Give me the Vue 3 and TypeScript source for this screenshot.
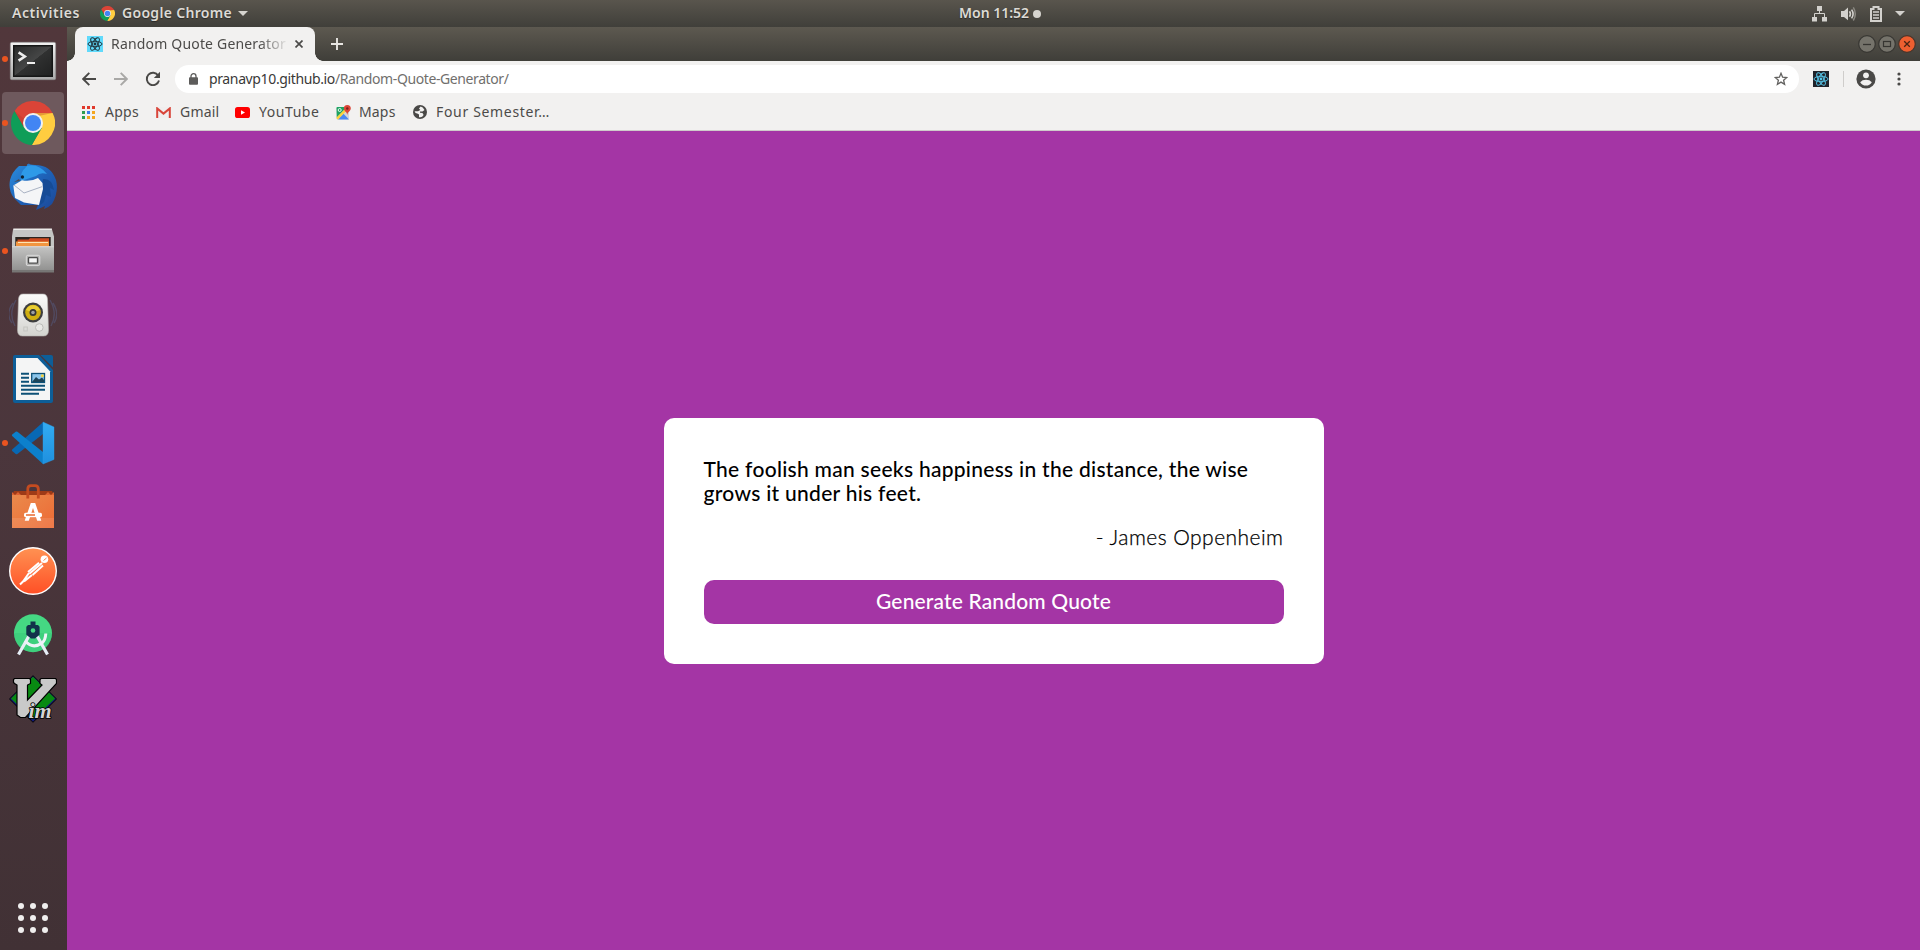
<script setup lang="ts">
import { ref } from 'vue'

interface Quote {
  text: string
  author: string
}

interface DockItem {
  id: string
  running?: boolean
  active?: boolean
}

const quote = ref<Quote>({
  text: 'The foolish man seeks happiness in the distance, the wise grows it under his feet.',
  author: 'James Oppenheim',
})

const dock: DockItem[] = [
  { id: 'terminal', running: true },
  { id: 'chrome', running: true, active: true },
  { id: 'thunderbird' },
  { id: 'files', running: true },
  { id: 'rhythmbox' },
  { id: 'writer' },
  { id: 'code', running: true },
  { id: 'software' },
  { id: 'postman' },
  { id: 'studio' },
  { id: 'vim' },
]

const grid = [0, 1, 2, 3, 4, 5, 6, 7, 8]
const appColors = ['#e0392b', '#e0392b', '#e0392b', '#2f9e4f', '#3b7ded', '#f4a61d', '#2f9e4f', '#f4a61d', '#f4a61d']
</script>

<template>
  <div class="desktop">
    <svg class="defs" width="0" height="0" aria-hidden="true">
      <defs>
        <linearGradient id="gTerm" x1="0" y1="0" x2="0" y2="1">
          <stop offset="0" stop-color="#f2f2f2" /><stop offset="1" stop-color="#a9a9a9" />
        </linearGradient>
        <linearGradient id="gTermIn" x1="0" y1="0" x2="1" y2="1">
          <stop offset="0" stop-color="#2a2b2b" /><stop offset=".5" stop-color="#454646" /><stop offset=".51" stop-color="#303131" /><stop offset="1" stop-color="#202121" />
        </linearGradient>
        <linearGradient id="gBird" x1="0" y1="0" x2="1" y2="1">
          <stop offset="0" stop-color="#2a8fe0" /><stop offset=".5" stop-color="#1e62b8" /><stop offset="1" stop-color="#1c4696" />
        </linearGradient>
        <linearGradient id="gFile" x1="0" y1="0" x2="0" y2="1">
          <stop offset="0" stop-color="#c4c4c3" /><stop offset="1" stop-color="#8e8e8d" />
        </linearGradient>
        <linearGradient id="gSpk" x1="0" y1="0" x2="0" y2="1">
          <stop offset="0" stop-color="#fbfbfa" /><stop offset="1" stop-color="#d3d3cf" />
        </linearGradient>
        <linearGradient id="gBag" x1="0" y1="0" x2="1" y2="1">
          <stop offset="0" stop-color="#ea8a4c" /><stop offset="1" stop-color="#ed6a35" />
        </linearGradient>
        <linearGradient id="gPost" x1="0" y1="0" x2="0" y2="1">
          <stop offset="0" stop-color="#ff9152" /><stop offset="1" stop-color="#ff5026" />
        </linearGradient>
        <linearGradient id="gVs" x1="0" y1="0" x2="0" y2="1">
          <stop offset="0" stop-color="#33acf2" /><stop offset="1" stop-color="#1f90df" />
        </linearGradient>
        <symbol id="chrome" viewBox="2 2 44 44">
          <path fill="#db4437" d="M5.54 12.03A22 22 0 0 1 43.6 14H24L15.34 29Z" />
          <path fill="#ffcd40" d="M43.6 14A22 22 0 0 1 22.86 45.97L32.66 29 24 14Z" />
          <path fill="#0f9d58" d="M22.86 45.97A22 22 0 0 1 5.54 12.03L15.34 29H32.66Z" />
          <path fill="#b5372c" opacity=".35" d="M24 14h19.6l-14 3ZM15.3 29 5.5 12l10 8Z" />
          <circle cx="24" cy="24" r="10" fill="#f1f1f1" />
          <circle cx="24" cy="24" r="8" fill="#4285f4" />
        </symbol>
        <symbol id="react" viewBox="0 0 16 16">
          <g fill="none" stroke="currentColor" stroke-width=".95">
            <ellipse cx="8" cy="8" rx="7" ry="2.7" />
            <ellipse cx="8" cy="8" rx="7" ry="2.7" transform="rotate(60 8 8)" />
            <ellipse cx="8" cy="8" rx="7" ry="2.7" transform="rotate(120 8 8)" />
          </g>
          <circle cx="8" cy="8" r="1.4" fill="currentColor" />
        </symbol>
      </defs>
    </svg>

    <header class="topbar">
      <div class="topbar-left">
        <span class="activities">Activities</span>
        <svg class="tb-chrome" width="15" height="15"><use href="#chrome" /></svg>
        <span class="appname">Google Chrome</span>
        <svg width="10" height="5"><path d="M0 0h10L5 5Z" fill="#d6d4cf" /></svg>
      </div>
      <div class="clock"><span>Mon 11:52</span><i class="clock-dot"></i></div>
      <div class="tray">
        <svg width="16" height="16" viewBox="0 0 16 16" fill="#d3d1cd">
          <path d="M5 0h5v5H5ZM0 11h5v4.5H0ZM10 11h5v4.5h-5Z" />
          <path d="M7.5 5v2.5M2.5 11V7.5h10V11" fill="none" stroke="#d3d1cd" />
        </svg>
        <svg width="16" height="16" viewBox="0 0 16 16" fill="none">
          <path d="M0 5h3l4-3.6v12.8L3 11H0Z" fill="#d3d1cd" />
          <path d="M8.5 5.3q1.8 2.7 0 5.4M10.6 3.6q3 4.3 0 8.8" stroke="#d3d1cd" stroke-width="1.6" />
          <path d="M12.3 1.3q4 6.6 0 13.2" stroke="#8a8780" stroke-width="1.5" />
        </svg>
        <svg width="12" height="16" viewBox="0 0 12 16">
          <path d="M3.5 1h5v2H11v12H1V3h2.5Z" fill="none" stroke="#d3d1cd" stroke-width="2" />
          <path d="M3 6h6M3 9h6M3 12h6" stroke="#d3d1cd" stroke-width="1.5" />
        </svg>
        <svg width="10" height="5"><path d="M0 0h10L5 5Z" fill="#d3d1cd" /></svg>
      </div>
    </header>

    <div class="body">
      <nav class="dock">
        <div v-for="item in dock" :key="item.id" class="dock-item" :class="{ active: item.active }">
          <i v-if="item.running" class="running"></i>
          <svg width="48" height="48" viewBox="0 0 48 48">
            <g v-if="item.id === 'terminal'">
              <rect x="1.3" y="7.3" width="45.4" height="37.4" rx="1.5" fill="url(#gTerm)" stroke="#8d8d8d" stroke-width=".6" />
              <rect x="4" y="10" width="40" height="32" fill="#151616" />
              <rect x="5.5" y="11.5" width="37" height="29" fill="url(#gTermIn)" />
              <path d="M9.6 17.3 15.8 21.5 9.6 25.7" fill="none" stroke="#eee" stroke-width="2.6" />
              <path d="M18 28h8" stroke="#eee" stroke-width="2" />
            </g>
            <use v-else-if="item.id === 'chrome'" href="#chrome" x="2" y="2" width="44" height="44" />
            <g v-else-if="item.id === 'thunderbird'">
              <path fill="url(#gBird)" d="M10 3Q15 3 18 3 17 1.5 20 .6 20 2 26 2 42 2 47 17 50 29 43 41 39 45 35 46L36 43 27 47 29 42 12 42 5 35Q-1 27 1 17 3 9 10 3Z" />
              <path fill="#2e9ae8" d="M18 3Q29 0 38 11 31 9 27 13L12 18Q10 10 18 3Z" />
              <path fill="#164b96" d="M34 16Q43 15 45 27L41 25 42 34 37 32 35 39 30 43 33 23Z" />
              <path fill="#f4f5f7" d="M4.3 22.5 13 17.3Q22 19 29 15L33.5 20 34 26 30 42 15 39.5 6 35Z" />
              <path d="m5 22 10 8 18-6.3" fill="none" stroke="#a9b2c3" stroke-width="1" />
              <circle cx="13.4" cy="14" r="1.7" fill="#123" /><path d="m5 19 5-3 1 2Z" fill="#4b4d54" />
            </g>
            <g v-else-if="item.id === 'files'">
              <path d="M4 2.5h39l2 7v10H3v-10Z" fill="#c5c5c4" />
              <path d="M4.3 2.3h38.6" stroke="#ecebea" stroke-width="1.4" />
              <path d="M6.3 10h35.4v10H6.3Z" fill="#2b2420" />
              <path d="M8.5 12.5h11l1.5-1.3h19v9h-31.5Z" fill="#cf4a1f" />
              <path d="M7 14.5h33v5H7Z" fill="#f2953f" /><path d="M9 15.5h30" stroke="#fde3b4" stroke-width="1" />
              <path d="M3 19.5h42V45H3Z" fill="url(#gFile)" /><path d="M3 19.7h42" stroke="#dedddc" />
              <path d="M3 43h42v2.6H3Z" fill="#777675" />
              <rect x="17.3" y="28.3" width="13.5" height="10.3" rx="1.5" fill="#b1b1b0" stroke="#dddcdc" />
              <rect x="19.5" y="30.6" width="9" height="5.6" rx=".7" fill="#f5f5f5" stroke="#4d4d4d" stroke-width="1.3" />
            </g>
            <g v-else-if="item.id === 'rhythmbox'">
              <g fill="none" stroke="#56618c" stroke-width="1.4" opacity=".45"><path d="M7 9Q-1 23 6 35M4 12Q-4 23 3 32M41 9q8 14 1 26M44 12q7 11 1 20" /></g>
              <path d="M14 3h20q4 0 4.5 5l1 31q0 6-5 6h-21q-5 0-5-6l1-31Q10 3 14 3Z" fill="url(#gSpk)" stroke="#b4b4b0" stroke-width=".6" />
              <circle cx="24" cy="21.5" r="10" fill="#3d3e3f" /><circle cx="24" cy="21.5" r="7.8" fill="#cfae10" />
              <path d="M17 19a7.5 7.5 0 0 1 14 0l-7 2.5Z" fill="#e8cd32" />
              <circle cx="24" cy="21.5" r="3.5" fill="#353638" /><circle cx="24" cy="21.5" r="1.8" fill="#9d9fa1" />
              <circle cx="30.3" cy="36.5" r="3.8" fill="#e9e9e6" stroke="#bcbcb8" /><rect x="14.8" y="36" width="3.5" height="4" fill="none" stroke="#c5c5c1" />
            </g>
            <g v-else-if="item.id === 'writer'">
              <path d="M6 0h24l14 15v31q0 2-2 2H6q-2 0-2-2V2q0-2 2-2Z" fill="#0d5e98" />
              <path d="M7 3h21.5L41 16.2V45H7Z" fill="#f4f5f5" />
              <path d="M31.5 0H42q2 0 2 2v10.5Z" fill="#0d5e98" />
              <path d="M12 18.8h8M12 22.8h8M12 26.8h8M12 30.8h24M12 34.8h24M12 38.8h18" stroke="#0d5177" stroke-width="2" />
              <rect x="22.7" y="18.5" width="12.8" height="9" fill="#8bc5ea" stroke="#0d5177" stroke-width="1.3" />
              <path d="m23 27 4-5 3 2.5 3-2 2 2.5v2Z" fill="#1d4458" /><circle cx="33.4" cy="20.7" r="1.5" fill="#f5d23d" />
            </g>
            <g v-else-if="item.id === 'code'">
              <path d="M34 3.2 3.2 30.5q-.6.8 0 1.5L6.7 35q.8.6 1.7 0L34 15Z" fill="#0868b4" />
              <path d="M34 45 3.2 17q-.6-.8 0-1.5L6.7 12.8q.8-.6 1.7 0L34 33Z" fill="#0c80cc" />
              <path d="m34 3 11 5v32.5L34 45Z" fill="url(#gVs)" stroke="#2b9fe8" stroke-width=".4" />
            </g>
            <g v-else-if="item.id === 'software'">
              <path d="M3 12 5 8h38l2 4Z" fill="#9e3a17" />
              <path d="M3 12V9l3 3 3-3 3 3M36 12l3-3 3 3 3-3v3" fill="#df6231" />
              <path d="M3 12h42v33H3Z" fill="url(#gBag)" /><path d="M3 35h42v10H3Z" fill="#fff" opacity=".1" />
              <path d="M18.8 15.5V6q0-3.3 3.2-3.3h4Q29.3 2.7 29.3 6v9.5" fill="none" stroke="#c44b20" stroke-width="2.8" />
              <path d="M15.7 37.8 21.8 20h4.4l6.1 17.8h-4.1L24 25l-4.2 12.8Z" fill="#fff" />
              <rect x="15" y="29.8" width="18" height="4.4" rx="1.6" fill="#fff" /><path d="M17 32h9" stroke="#e9682f" stroke-width="1.5" />
            </g>
            <g v-else-if="item.id === 'postman'">
              <circle cx="24" cy="24" r="24" fill="#fff" /><circle cx="24" cy="24" r="22.6" fill="url(#gPost)" />
              <circle cx="35.4" cy="12.3" r="3.8" fill="#fff" />
              <path d="M33 16 20.3 26.7M30 15.8 19 25M34 18.5 23.5 28" stroke="#fff" stroke-width="1.9" />
              <path d="M20 26 14 34.5 11 37.5M23 28 15 34.5" stroke="#fff" stroke-width="2" />
              <path d="m34.5 13.5 3-2.5" stroke="#f47a45" stroke-width=".9" />
            </g>
            <g v-else-if="item.id === 'studio'">
              <circle cx="24" cy="22.3" r="19" fill="#45d883" /><path d="M5 22h38a19 19 0 0 1-38 0Z" fill="#2fbd70" opacity=".3" />
              <path d="M20.5 24 9.5 43.5M27.5 24l11 19.5" stroke="#e6edf5" stroke-width="3.2" />
              <path d="M16 30Q24 38.5 33 32 36.5 29 36.8 22.5" fill="none" stroke="#eef3f8" stroke-width="3" />
              <path d="M21.5 10.5h5V14h2.5l1.6 1.7v8L26 27.5h-4l-4.7-3.8v-8L19 14h2.5Z" fill="#12324a" />
              <circle cx="24" cy="19.5" r="2.3" fill="#45d883" />
            </g>
            <g v-else>
              <path d="M24 .7 47.5 24 24 47.3.5 24Z" fill="#111a78" stroke="#000" />
              <path d="M24 1.7 46 23.5 24 44.5 2 23.5Z" fill="#088a12" />
              <path d="M5.5 3.5h15l1 1v4L18.500 10v15L33 10l-2-1.500v-4l1-1h14.500l1 1v4L16.500 42.500h-5L8 40V10L5.500 8.500l-1-1v-3Z" fill="#c9c9c9" stroke="#000" stroke-width="1.2" />
              <text x="19.5" y="42.7" class="vim-im">im</text>
            </g>
          </svg>
        </div>
        <div class="app-grid"><i v-for="n in grid" :key="n"></i></div>
      </nav>

      <section class="window">
        <div class="tabstrip">
          <div class="tab">
            <svg class="favicon" width="16" height="16"><use href="#react" /></svg>
            <span class="tab-title">Random Quote Generator</span>
            <svg width="8" height="8"><path d="m.5.5 7 7m0-7-7 7" stroke="#4c4b49" stroke-width="1.7" /></svg>
          </div>
          <svg class="plus" width="12" height="12"><path d="M6 0v12M0 6h12" stroke="#e8e6e2" stroke-width="1.9" /></svg>
          <div class="winctl">
            <svg width="20" height="20" viewBox="0 0 20 20"><circle cx="10" cy="10" r="8.3" fill="#75736b" stroke="#383733" stroke-width="1.2" /><path d="M6 10.5h8" stroke="#363531" stroke-width="1.3" /></svg>
            <svg width="20" height="20" viewBox="0 0 20 20"><circle cx="10" cy="10" r="8.3" fill="#75736b" stroke="#383733" stroke-width="1.2" /><rect x="6.5" y="7.5" width="7" height="5" fill="none" stroke="#363531" stroke-width="1.2" /></svg>
            <svg width="20" height="20" viewBox="0 0 20 20"><circle cx="10" cy="10" r="8.3" fill="#ee5f30" stroke="#4a352b" stroke-width="1.2" /><path d="m7.2 7.2 5.6 5.6m0-5.6-5.6 5.6" stroke="#4a2413" stroke-width="1.3" /></svg>
          </div>
        </div>

        <div class="toolbar">
          <svg width="14" height="14"><path d="M14 7H1.5M7.3.8 1.2 7l6.1 6.2" fill="none" stroke="#4a4947" stroke-width="1.9" /></svg>
          <svg class="fwd" width="14" height="14"><path d="M0 7h12.5M6.7.8 12.8 7l-6.1 6.2" fill="none" stroke="#a9a8a6" stroke-width="1.9" /></svg>
          <svg class="reload" width="16" height="16" viewBox="0 0 16 16"><path d="M13.2 4.5A6.2 6.2 0 1 0 14 9.5" fill="none" stroke="#4a4947" stroke-width="1.9" /><path d="M15 .8v6.2H8.8Z" fill="#4a4947" /></svg>
          <div class="omnibox">
            <svg width="9" height="12" viewBox="0 0 9 12"><path d="M2 5V3.2a2.4 2.4 0 0 1 5 0V5" fill="none" stroke="#5d5c5b" stroke-width="1.3" /><rect x="0" y="4.3" width="9" height="7.4" rx=".9" fill="#5d5c5b" /></svg>
            <span class="url"><span class="host">pranavp10.github.io</span><span class="path">/Random-Quote-Generator/</span></span>
            <svg class="star" width="14" height="14" viewBox="0 0 14 14"><path d="m7 1.3 1.6 3.9 4.2.3-3.2 2.7 1 4.1L7 10.1l-3.6 2.2 1-4.1L1.2 5.5l4.2-.3Z" fill="none" stroke="#62615f" stroke-width="1.3" /></svg>
          </div>
          <svg class="ext" width="16" height="16"><use href="#react" /></svg>
          <i class="divider"></i>
          <svg width="20" height="20" viewBox="0 0 20 20"><circle cx="10" cy="10" r="9.6" fill="#4a4947" /><circle cx="10" cy="6.3" r="2.9" fill="#f2f1f0" /><path d="M4.2 13.2q2-2.4 5.8-2.4t5.8 2.4Q13.8 16.6 10 16.6T4.2 13.2Z" fill="#f2f1f0" /></svg>
          <svg class="more" width="4" height="14"><g fill="#4a4947"><circle cx="2" cy="2" r="1.6" /><circle cx="2" cy="7" r="1.6" /><circle cx="2" cy="12" r="1.6" /></g></svg>
        </div>

        <div class="bookmarks">
          <div class="bm apps">
            <span class="apps-ico"><svg v-for="(c, i) in appColors" :key="i" width="3" height="3"><rect width="3" height="3" :fill="c" /></svg></span>
            <span class="label">Apps</span>
          </div>
          <div class="bm gmail">
            <svg width="15" height="11" viewBox="0 0 15 11"><rect width="15" height="11" rx="1" fill="#f0eeee" /><path d="M1.2 11V1.4l6.3 5.2 6.3-5.2V11" fill="none" stroke="#d9453a" stroke-width="2" /></svg>
            <span class="label">Gmail</span>
          </div>
          <div class="bm youtube">
            <svg width="15" height="11" viewBox="0 0 15 11"><rect width="15" height="11" rx="2.6" fill="#f00" /><path d="m6 3.2 4 2.3-4 2.3Z" fill="#fff" /></svg>
            <span class="label">YouTube</span>
          </div>
          <div class="bm maps">
            <svg width="15" height="15" viewBox="0 0 15 15">
              <rect x=".5" y="2" width="12.5" height="12.5" rx="1" fill="#d5d5d5" />
              <path d="M.5 3q0-1 1-1H11L.8 12.5Z" fill="#1ea362" /><path d="m2 14.5 5.5-5.8 5.5 5.8Z" fill="#4a89f3" />
              <path d="M.5 12.5 10 3l1.5 1.7L2 14.5Q.5 14.5.5 12.5Z" fill="#fcd43c" />
              <circle cx="3.7" cy="5" r="1.5" fill="none" stroke="#fff" stroke-width=".9" />
              <path d="M11.3 0a3.5 3.5 0 0 1 3.5 3.5c0 2.5-3 3-3.5 6.5-.5-3.5-3.5-4-3.5-6.5A3.5 3.5 0 0 1 11.3 0Z" fill="#dc4638" /><circle cx="11.3" cy="3.5" r="1.2" fill="#7d201b" />
            </svg>
            <span class="label">Maps</span>
          </div>
          <div class="bm four">
            <svg width="14" height="14" viewBox="0 0 14 14"><circle cx="7" cy="7" r="7" fill="#494846" /><path d="M7.6 1.5 6 3.5 7.3 5 5 6.3H1.6q.5 2.2 2.7 2.2l1.7 1v2.7q3 .8 4.6-2.1L9.5 8 7 7.8V6.5h2.5L11.5 5 9.7 2.4Z" fill="#f2f1f0" /></svg>
            <span class="label">Four Semester…</span>
          </div>
        </div>

        <main class="page">
          <article class="card">
            <p class="quote">{{ quote.text }}</p>
            <p class="author">- {{ quote.author }}</p>
            <button type="button" class="generate">Generate Random Quote</button>
          </article>
        </main>
      </section>
    </div>
  </div>
</template>

<style>
body { margin: 0; overflow: hidden; }
</style>

<style scoped>
.desktop {
  width: 1920px;
  height: 950px;
  display: flex;
  flex-direction: column;
  overflow: hidden;
  font-family: "Noto Sans", "Open Sans", sans-serif;
  font-size: 14px;
}
.defs { position: absolute; }
svg { display: block; flex: none; }
span { white-space: nowrap; }

.topbar {
  height: 27px;
  flex: none;
  display: grid;
  grid-template-columns: 959px auto 1fr;
  align-items: center;
  background: linear-gradient(#59554d, #403f3a);
  color: #dddad5;
  font-weight: 600;
  text-shadow: 0 1px 1px #2b2a27;
}
.topbar span { padding-bottom: 2px; }
.topbar-left { display: flex; align-items: center; padding-left: 12px; }
.activities { width: 88px; letter-spacing: .55px; }
.tb-chrome { margin-right: 7px; }
.appname { width: 116px; letter-spacing: .31px; }
.clock { display: flex; align-items: center; gap: 4px; }
.clock-dot { width: 8px; height: 8px; border-radius: 50%; background: #d6d4cf; }
.tray { display: flex; align-items: center; justify-content: flex-end; gap: 13px; padding-right: 15px; }

.body { flex: 1; display: flex; min-height: 0; }

.dock {
  width: 67px;
  flex: none;
  box-sizing: border-box;
  padding: 1px 3px 0 2px;
  display: flex;
  flex-direction: column;
  gap: 2px;
  background: linear-gradient(#51373b, #4b363c 45%, #413135);
}
.dock-item {
  position: relative;
  height: 62px;
  width: 62px;
  display: flex;
  align-items: center;
  justify-content: center;
  border-radius: 4px;
}
.dock-item.active { background: #6e595d; }
.running {
  position: absolute;
  left: 0;
  top: 28px;
  width: 6px;
  height: 6px;
  border-radius: 50%;
  background: #ea5420;
}
.vim-im {
  font: italic 700 22px "Liberation Serif", serif;
  fill: #d4d4d4;
  stroke: #000;
  stroke-width: 1.6px;
  paint-order: stroke;
}
.app-grid {
  margin: auto 0 17px 16px;
  display: grid;
  grid-template-columns: repeat(3, 6px);
  gap: 6px;
}
.app-grid i { height: 6px; border-radius: 50%; background: #f0eeee; }

.window { flex: 1; min-width: 0; display: flex; flex-direction: column; background: #f2f1f0; color: #4c4b49; }
.tabstrip {
  height: 34px;
  flex: none;
  display: flex;
  align-items: center;
  padding-left: 8px;
  background: linear-gradient(#5d5950, #3f3e39);
}
.tab {
  position: relative;
  width: 240px;
  height: 34px;
  box-sizing: border-box;
  display: flex;
  align-items: center;
  padding-left: 12px;
  background: #f2f1f0;
  border-radius: 8px 8px 0 0;
}
.tab::before, .tab::after {
  content: "";
  position: absolute;
  bottom: 0;
  width: 8px;
  height: 8px;
}
.tab::before { left: -8px; background: radial-gradient(circle at 0 0, transparent 7.5px, #f2f1f0 8px); }
.tab::after { right: -8px; background: radial-gradient(circle at 100% 0, transparent 7.5px, #f2f1f0 8px); }
.favicon { background: #61dafb; color: #20323a; margin-right: 8px; }
.tab-title {
  width: 176px;
  margin-right: 8px;
  padding-bottom: 2px;
  overflow: hidden;
  letter-spacing: .18px;
  mask-image: linear-gradient(to right, #000 148px, transparent 178px);
}
.plus { margin-left: 16px; }
.winctl { margin-left: auto; display: flex; padding-right: 3px; }

.toolbar { height: 36px; flex: none; display: flex; align-items: center; padding-left: 15px; }
.fwd { margin-left: 18px; }
.reload { margin-left: 17px; }
.omnibox {
  width: 1624px;
  height: 28px;
  margin: 0 14px;
  box-sizing: border-box;
  display: flex;
  align-items: center;
  padding: 0 11px 0 14px;
  border-radius: 14px;
  background: #fff;
}
.url { margin-left: 11px; padding-bottom: 2px; display: flex; }
.host { width: 126px; letter-spacing: -.37px; color: #3a3938; }
.path { letter-spacing: -.4px; color: #716f6d; }
.star { margin-left: auto; }
.ext { background: #20232a; color: #55c3e6; }
.divider { width: 1px; height: 16px; margin: 0 12px 0 14px; background: #cfcdcb; }
.more { margin-left: 21px; }

.bookmarks {
  height: 34px;
  flex: none;
  box-sizing: border-box;
  display: flex;
  align-items: center;
  padding: 0 0 3px 15px;
  border-bottom: 1px solid #cfcbcb;
}
.bm { display: flex; align-items: center; }
.label { padding-bottom: 2px; }
.apps-ico { display: grid; grid-template-columns: repeat(3, 3px); gap: 2px; margin-right: 10px; }
.apps { width: 74px; letter-spacing: .28px; }
.gmail { width: 79px; letter-spacing: .2px; }
.gmail svg { margin-right: 9px; }
.youtube { width: 101px; letter-spacing: .55px; }
.youtube svg { margin-right: 9px; }
.maps { width: 77px; letter-spacing: .16px; }
.maps svg { margin-right: 8px; }
.four { letter-spacing: .67px; }
.four svg { margin-right: 9px; }

.page {
  flex: 1;
  display: flex;
  align-items: center;
  justify-content: center;
  background: #a435a5;
  font-family: Lato, sans-serif;
}
.card {
  width: 660px;
  height: 246px;
  box-sizing: border-box;
  padding: 39px 40px 41px;
  border-radius: 10px;
  background: #fff;
  color: #000;
  font-size: 21px;
  line-height: 24px;
}
.card p { margin: 0; }
.quote { font-weight: 500; letter-spacing: .28px; }
.card .author {
  margin-top: 20px;
  text-align: right;
  font-weight: 300;
  letter-spacing: .46px;
  -webkit-text-stroke: .25px #000;
}
.generate {
  display: block;
  width: 580px;
  height: 44px;
  margin-top: 31px;
  padding: 0 0 2px;
  border: 0;
  border-radius: 10px;
  background: #a435a5;
  color: #fff;
  font: 500 21px/24px Lato, sans-serif;
  letter-spacing: .16px;
}
</style>
